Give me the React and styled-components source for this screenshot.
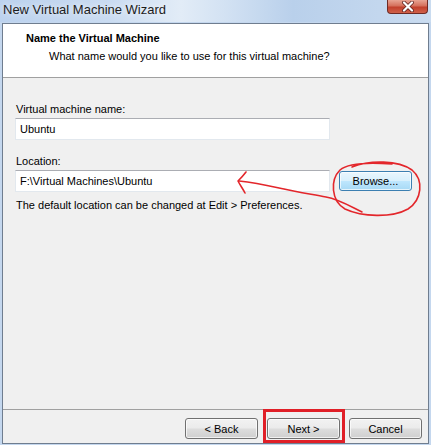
import styled, { createGlobalStyle } from "styled-components";

const GlobalStyle = createGlobalStyle`
    body {
        margin: 0;
        font-family: "Liberation Sans", Arial, sans-serif;
        font-size: 11px;
        color: #000;
    }
`;

function Annotations() {
    return (
        <Overlay width="431" height="445" viewBox="0 0 431 445">
            {/* circle round the Browse button */}
            <path
                d="M352 167 C370 160 398 160 412 170 C424 180 422 200 408 209 C392 218 362 217 345 209 C331 201 330 180 340 170 C348 163 366 162 392 164"
                fill="none" stroke="#e3262b" strokeWidth="1.6" strokeLinecap="round"
            />
            {/* arrow pointing at the location box */}
            <path
                d="M362 212 C348 205 338 199 326 197 C310 194 296 192 284 189 C270 186 258 183 239 181"
                fill="none" stroke="#e3262b" strokeWidth="1.6" strokeLinecap="round"
            />
            <path
                d="M246 172 C243 176 240 179 238 181 C240 185 243 189 245 193"
                fill="none" stroke="#e3262b" strokeWidth="1.6" strokeLinecap="round" strokeLinejoin="round"
            />
            {/* box round Next */}
            <rect x="264.5" y="410.5" width="79" height="31" fill="none" stroke="#e01f27" strokeWidth="3" />
        </Overlay>
    );
}

function App() {
    return (
        <>
            <GlobalStyle />
            <Window>
                <TitleBar>
                    <Caption>New Virtual Machine Wizard</Caption>
                    <CloseButton>
                        <svg width="16" height="11" viewBox="0 0 16 11">
                            <path d="M4 1.5 L12 9.5 M12 1.5 L4 9.5" stroke="#5a1d1a" strokeWidth="3.8" strokeLinecap="round" />
                            <path d="M4 1.5 L12 9.5 M12 1.5 L4 9.5" stroke="#fff" strokeWidth="2.3" strokeLinecap="round" />
                        </svg>
                    </CloseButton>
                </TitleBar>
                <Client>
                    <Header>
                        <HeaderTitle>Name the Virtual Machine</HeaderTitle>
                        <HeaderSub>What name would you like to use for this virtual machine?</HeaderSub>
                    </Header>
                    <Body>
                        <Label>Virtual machine name:</Label>
                        <TextBox value="Ubuntu" readOnly />
                        <Label $top={14}>Location:</Label>
                        <Row>
                            <TextBox value="F:\Virtual Machines\Ubuntu" readOnly />
                            <Button $primary $width={73}>Browse...</Button>
                        </Row>
                        <Hint>The default location can be changed at Edit &gt; Preferences.</Hint>
                    </Body>
                    <Footer>
                        <Button>&lt; Back</Button>
                        <Button>Next &gt;</Button>
                        <Button>Cancel</Button>
                    </Footer>
                </Client>
                <Annotations />
            </Window>
        </>
    );
}

export default App;

const Window = styled.div`
    position: relative;
    width: 431px;
    height: 445px;
    display: flex;
    flex-direction: column;
    background: #c4d7ee;
    overflow: hidden;
`;

const TitleBar = styled.div`
    height: 22px;
    display: flex;
    justify-content: space-between;
    align-items: flex-start;
    padding-left: 3px;
    background: linear-gradient(90deg, #bcd2ee 0%, #c9dbf1 25%, #e2ecf7 42%, #d3e2f3 52%, #b9d0eb 68%, #c3d7ee 88%, #cadcf0 100%);
`;

const Caption = styled.div`
    font-family: "Liberation Sans", Arial, sans-serif;
    font-size: 13px;
    line-height: 20px;
    color: #1c1c1c;
    text-shadow: 0 0 6px rgba(255, 255, 255, 0.95);
`;

const CloseButton = styled.div`
    width: 41px;
    height: 14px;
    margin-right: 3px;
    box-sizing: border-box;
    display: flex;
    align-items: center;
    justify-content: center;
    border: 1px solid #6e2a24;
    border-top: none;
    border-radius: 0 0 4px 4px;
    background: linear-gradient(180deg, #e8a493 0%, #d5705c 45%, #c2402c 55%, #d0614a 100%);
`;

const Client = styled.div`
    flex: 1;
    display: flex;
    flex-direction: column;
    margin: 1px 2px 1px 2px;
    border: 1px solid #6f7d8f;
    background: #f0f0f0;
`;

const Header = styled.div`
    height: 54px;
    box-sizing: border-box;
    padding: 7px 0 0 23px;
    background: #fff;
    border-bottom: 1px solid #a0a0a0;
`;

const HeaderTitle = styled.div`
    font-weight: bold;
    line-height: 14px;
`;

const HeaderSub = styled.div`
    margin-top: 4px;
    padding-left: 23px;
    line-height: 14px;
`;

const Body = styled.div`
    flex: 1;
    padding: 24px 0 0 12px;
`;

const Label = styled.div`
    line-height: 14px;
    padding-left: 1px;
    margin-top: ${p => p.$top || 0}px;
    margin-bottom: 2px;
`;

const TextBox = styled.input`
    display: block;
    width: 315px;
    height: 22px;
    box-sizing: border-box;
    margin: 0;
    padding: 0 4px;
    border: 1px solid #e2e8ee;
    border-top-color: #abadb3;
    background: #fff;
    font-family: "Liberation Sans", Arial, sans-serif;
    font-size: 11px;
    color: #000;
    outline: none;
`;

const Row = styled.div`
    display: flex;
    align-items: center;
    gap: 9px;
`;

const Hint = styled.div`
    margin-top: 6px;
    padding-left: 1px;
    line-height: 14px;
`;

const Footer = styled.div`
    height: 34px;
    display: flex;
    justify-content: flex-end;
    align-items: flex-start;
    gap: 9px;
    box-sizing: border-box;
    padding: 8px 6px 0 0;
    border-top: 1px solid #a0a0a0;
`;

const Button = styled.button`
    width: ${p => p.$width || 73}px;
    height: ${p => (p.$primary ? 20 : 21)}px;
    margin: 0;
    padding: 0;
    box-sizing: border-box;
    border: 1px solid ${p => (p.$primary ? "#3c7fb1" : "#707070")};
    border-radius: 3px;
    background: ${p =>
        p.$primary
            ? "linear-gradient(180deg, #eaf6fd 0%, #d9f0fc 48%, #bee6fd 52%, #a7d9f5 100%)"
            : "linear-gradient(180deg, #f2f2f2 0%, #ebebeb 48%, #dddddd 52%, #cfcfcf 100%)"};
    box-shadow: inset 0 0 0 1px rgba(255, 255, 255, 0.7);
    font-family: "Liberation Sans", Arial, sans-serif;
    font-size: 11px;
    color: #000;
`;

const Overlay = styled.svg`
    position: absolute;
    top: 0;
    left: 0;
    pointer-events: none;
`;
